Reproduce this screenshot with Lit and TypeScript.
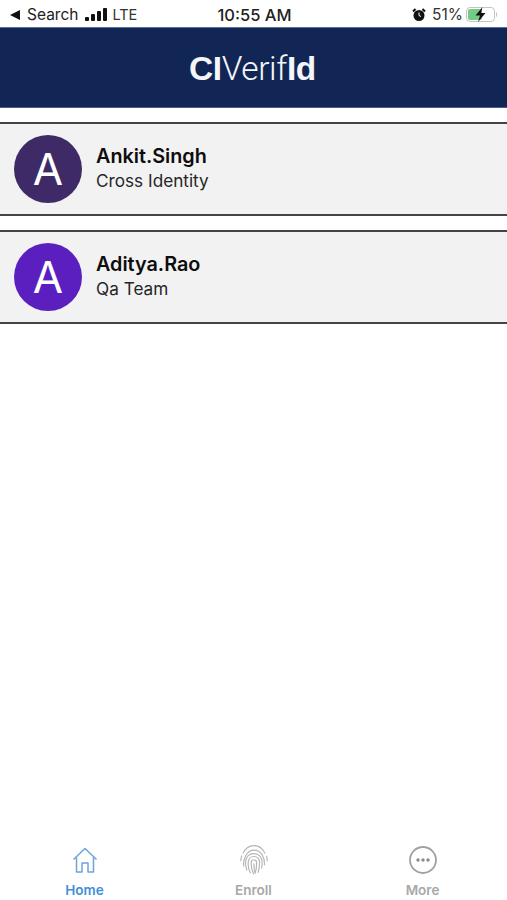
import { LitElement, html, css, svg } from 'lit'
import { customElement } from 'lit/decorators.js'

const accounts = [
  { name: 'Ankit.Singh', team: 'Cross Identity', color: '#3f2a68' },
  { name: 'Aditya.Rao', team: 'Qa Team', color: '#5b1fc0' },
]

const signalBars = [4, 7, 10, 13]

const fingerprintArcs = [
  'M5.500 9.500C7.500 4.500 11 2.500 15 2.500s7.500 2 9.500 7',
  'M3.500 16c0-2 .4-3.600 1-5M26.500 16c0-1.800-.3-3.300-.8-4.600',
  'M6 20.500c-.5-6.500 2.500-14 9-14s9.500 6.500 9 13',
  'M9 24c-1-2-1.500-4.500-1.300-7.500.3-4 3-7 7.300-7s7 3.200 7 7.500c0 2.200-.1 4-.5 5.500',
  'M12 26.500c-1.500-2.500-2.300-6-2-9.500.2-2.800 2.200-5 5-5s4.800 2.200 4.800 5c0 3.500-.3 6.500-1.300 9',
  'M15 14.800c-1.500 0-2.500 1-2.500 2.500 0 3.500.7 7 2.200 10',
  'M15 15c1.500 0 2.300 1.100 2.300 2.500 0 3.500-.5 6.800-1.500 9.500',
  'M15 18c0 3 .2 6 .6 8',
]

@customElement('app-root')
export class AppRoot extends LitElement {
  static styles = css`
    :host {
      display: flex;
      flex-direction: column;
      height: 900px;
      background: #fff;
      font-family: Inter, 'Liberation Sans', sans-serif;
      color: #111;
      overflow: hidden;
    }

    .status {
      height: 27px;
      flex: none;
      box-sizing: border-box;
      padding: 2px 8px 0 10px;
      display: grid;
      grid-template-columns: 1fr auto 1fr;
      align-items: center;
      font-size: 15.500px;
      color: #222;
    }

    .status-left,
    .status-right {
      display: flex;
      align-items: center;
    }

    .status-right {
      justify-content: flex-end;
    }

    .back {
      width: 0;
      height: 0;
      border-top: 5px solid transparent;
      border-bottom: 5px solid transparent;
      border-right: 10px solid #111;
      margin-right: 7px;
    }

    .signal {
      display: flex;
      align-items: flex-end;
      gap: 2px;
      margin: 0 5px 0 7px;
    }

    .signal span {
      width: 4px;
      background: #111;
      border-radius: 1px;
    }

    .lte {
      font-size: 14.500px;
      color: #333;
    }

    .time {
      font-size: 16.500px;
      font-weight: 500;
    }

    .alarm {
      margin-right: 6px;
    }

    .percent {
      margin-right: 3px;
      color: #333;
    }

    .header {
      height: 81px;
      flex: none;
      box-sizing: border-box;
      padding: 2px 2px 0 0;
      background: #112654;
      border-top: 1px solid #5f6f93;
      border-bottom: 1px solid #4a5b85;
      display: flex;
      align-items: center;
      justify-content: center;
      color: #f4f6fa;
      font-family: 'Liberation Sans', Arial, sans-serif;
      font-size: 33.500px;
      letter-spacing: -0.4px;
    }

    .header b {
      font-weight: 700;
    }

    .header .thin {
      font-family: Roboto, 'Liberation Sans', sans-serif;
      font-weight: 300;
    }

    .list {
      flex: 1;
      display: flex;
      flex-direction: column;
      gap: 14px;
      padding-top: 14px;
    }

    .card {
      height: 94px;
      box-sizing: border-box;
      background: #f2f2f3;
      border-top: 2px solid #444;
      border-bottom: 2px solid #444;
      padding-left: 14px;
      display: flex;
      align-items: center;
      gap: 14px;
    }

    .avatar {
      width: 68px;
      height: 68px;
      border-radius: 50%;
      display: flex;
      align-items: center;
      justify-content: center;
      color: #fff;
      font-size: 44px;
      font-weight: 400;
    }

    .text {
      margin-top: -2px;
    }

    .name {
      font-size: 19.800px;
      font-weight: 600;
      line-height: 26px;
      color: #0d0d0d;
    }

    .team {
      font-size: 17.200px;
      line-height: 24px;
      color: #262626;
    }

    .tabs {
      height: 72px;
      flex: none;
      box-sizing: border-box;
      padding-top: 17px;
      display: grid;
      grid-template-columns: repeat(3, 1fr);
    }

    .tab {
      display: flex;
      flex-direction: column;
      align-items: center;
      gap: 7px;
      font-size: 13.500px;
      line-height: 16px;
      font-weight: 600;
      color: #a8a8a8;
    }

    .tab svg {
      width: 30px;
      height: 30px;
      fill: none;
      stroke: #a0a0a0;
    }

    .tab.active {
      color: #3f8fd8;
    }

    .tab.active svg {
      stroke: #6ea3dc;
    }

    .tab svg.print {
      stroke: #b5b5b5;
    }
  `

  private renderCard(account: { name: string; team: string; color: string }) {
    return html`
      <div class="card">
        <div class="avatar" style="background: ${account.color}">A</div>
        <div class="text">
          <div class="name">${account.name}</div>
          <div class="team">${account.team}</div>
        </div>
      </div>
    `
  }

  render() {
    return html`
      <div class="status">
        <div class="status-left">
          <span class="back"></span>
          <span>Search</span>
          <span class="signal">
            ${signalBars.map((h) => html`<span style="height: ${h}px"></span>`)}
          </span>
          <span class="lte">LTE</span>
        </div>
        <div class="time">10:55 AM</div>
        <div class="status-right">
          <svg class="alarm" width="14" height="14" viewBox="0 0 14 14">
            <circle cx="7" cy="7.500" r="5.500" fill="#111" />
            <path d="M1 3.500 3.500 1M13 3.500 10.500 1" stroke="#111" stroke-width="2" />
            <path d="M7 4.500v3l2 1" stroke="#fff" fill="none" />
          </svg>
          <span class="percent">51%</span>
          <svg width="33" height="17" viewBox="0 0 33 17">
            <rect x="0.500" y="1.500" width="28" height="14" rx="3.500" fill="#fff" stroke="#c4c4c4" />
            <rect x="2" y="3" width="14" height="11" rx="2" fill="#74cc82" />
            <path d="M30 6v5c1.500-.5 1.500-4.500 0-5z" fill="#c4c4c4" />
            <path d="M16.500 1 9.500 9.500h4.500l-2 6.500 7.500-9h-4.500z" fill="#111" />
          </svg>
        </div>
      </div>

      <div class="header"><span><b>CI</b><span class="thin">Verif</span><b>Id</b></span></div>

      <div class="list">${accounts.map((a) => this.renderCard(a))}</div>

      <div class="tabs">
        <div class="tab active">
          <svg viewBox="0 0 30 30" stroke-width="1.500">
            <path d="M3.500 14.500 15 3.500l11.500 11M6.500 12.500V27h5.500v-9h6v9h5.500V12.500" stroke-linejoin="round" />
          </svg>
          Home
        </div>
        <div class="tab">
          <svg class="print" viewBox="2.500 2 25 26" stroke-width="1">
            ${fingerprintArcs.map((d) => svg`<path d=${d} />`)}
          </svg>
          Enroll
        </div>
        <div class="tab">
          <svg viewBox="0 0 30 30" stroke-width="1.800">
            <circle cx="15" cy="15" r="13" />
            <circle cx="10" cy="15" r="1.700" fill="#8a8a8a" stroke="none" />
            <circle cx="15" cy="15" r="1.700" fill="#8a8a8a" stroke="none" />
            <circle cx="20" cy="15" r="1.700" fill="#8a8a8a" stroke="none" />
          </svg>
          More
        </div>
      </div>
    `
  }
}
